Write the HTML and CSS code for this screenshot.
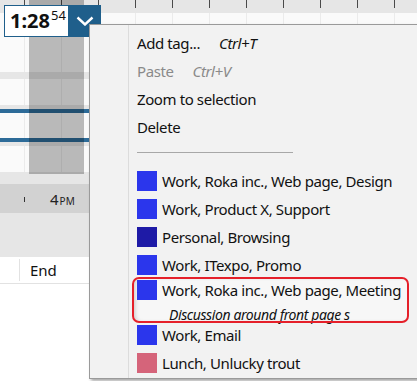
FILE: index.html
```html
<!DOCTYPE html>
<html lang="en">
<head>
    <meta charset="UTF-8">
    <meta name="viewport" content="width=device-width, initial-scale=1.0">
    <title>Timeline</title>
    <link rel="stylesheet" href="styles.css">
</head>
<body>
    <div class="timeline">
        <div class="ruler"></div>
        <div class="lane" style="height: 59px"></div>
        <div class="band" style="height: 7px"></div>
        <div class="lane" style="height: 26px"></div>
        <div class="track track-top"></div>
        <div class="lane" style="height: 25px"></div>
        <div class="track track-bottom"></div>
        <div class="lane" style="height: 26px"></div>
        <div class="band" style="height: 12px"></div>
        <div class="hours">
            <span class="hour-tick"></span>
            <span class="hour">4<small>PM</small></span>
        </div>
        <div class="band" style="height: 44px"></div>
        <div class="list-head">
            <span class="col-sep"></span>
            <span class="col-title">End</span>
        </div>
        <div class="list-body"></div>

        <div class="selection"></div>

        <div class="clock">
            <div class="clock-value">1:28<sup>54</sup></div>
            <button class="clock-btn" type="button">
                <svg width="18" height="10" viewBox="0 0 18 10">
                    <path d="M1.5 1.5 L9 8.5 L16.5 1.5" fill="none" stroke="#fff" stroke-width="2.4"/>
                </svg>
            </button>
        </div>
    </div>

    <div class="menu">
        <div class="menu-item">Add tag...<span class="shortcut">Ctrl+T</span></div>
        <div class="menu-item disabled">Paste<span class="shortcut">Ctrl+V</span></div>
        <div class="menu-item">Zoom to selection</div>
        <div class="menu-item">Delete</div>
        <div class="menu-sep"><span></span></div>

        <div class="tag"><span class="swatch work"></span>Work, Roka inc., Web page, Design</div>
        <div class="tag"><span class="swatch work"></span>Work, Product X, Support</div>
        <div class="tag"><span class="swatch personal"></span>Personal, Browsing</div>
        <div class="tag"><span class="swatch work"></span>Work, ITexpo, Promo</div>
        <div class="tag tag-current">
            <span class="swatch work"></span>
            <span class="tag-title">Work, Roka inc., Web page, Meeting</span>
            <span class="tag-note">Discussion around front page s</span>
        </div>
        <div class="tag"><span class="swatch work"></span>Work, Email</div>
        <div class="tag"><span class="swatch lunch"></span>Lunch, Unlucky trout</div>
    </div>
</body>
</html>
```

FILE: styles.css
```css
html, body {
    margin: 0;
    padding: 0;
    overflow: hidden;
}

body {
    font-family: 'Segoe UI', 'Noto Sans', 'Open Sans', sans-serif;
    width: 417px;
    height: 381px;
    background-color: #fff;
    position: relative;
}

.timeline {
    position: relative;
    display: flex;
    flex-direction: column;
    height: 381px;
}

.ruler {
    height: 13px;
    background: linear-gradient(to right, #4a4a4a 1px, transparent 1px) 24px 0 / 37px 8px repeat-x, #e6e6e6;
}

.lane {
    background: linear-gradient(to right, #ebebeb 1px, transparent 1px) 24px 0 / 37px 100% repeat-x, #fafafa;
}

.band {
    background-color: #e6e6e6;
}

.track {
    height: 8px;
    background-color: #e6e6e6;
}

.track-top {
    border-bottom: 4px solid #2d6b98;
    height: 4px;
}

.track-bottom {
    border-top: 4px solid #2d6b98;
    height: 4px;
}

.hours {
    height: 29px;
    background-color: #d2d2d2;
    display: flex;
    align-items: center;
    position: relative;
}

.hour-tick {
    width: 1px;
    height: 5px;
    background-color: #333;
    margin-left: 24px;
    margin-top: 1px;
}

.hour {
    margin-left: 25px;
    font-size: 15px;
    color: #222;
    margin-top: 1px;
}

.hour small {
    font-size: 10px;
    margin-left: 1px;
}

.list-head {
    height: 26px;
    background-color: #fff;
    border-bottom: 1px solid #e2e2e2;
    display: flex;
    align-items: center;
}

.col-sep {
    width: 1px;
    height: 22px;
    background-color: #e2e2e2;
    margin-left: 19px;
}

.col-title {
    margin-left: 10px;
    font-size: 15px;
    color: #111;
}

.list-body {
    flex: 1;
    background-color: #fff;
}

.selection {
    position: absolute;
    left: 29px;
    top: 0;
    width: 55px;
    height: 174px;
    background-color: rgba(0, 0, 0, 0.26);
}

.clock {
    position: absolute;
    left: 4px;
    top: 5px;
    display: flex;
    height: 32px;
}

.clock-value {
    width: 65px;
    box-sizing: border-box;
    border: 1.5px solid #1f5f8b;
    background-color: #fff;
    font-weight: bold;
    font-size: 20px;
    color: #111;
    padding-left: 5px;
    line-height: 30px;
}

.clock-value sup {
    font-weight: normal;
    font-size: 13px;
    vertical-align: 0;
    position: relative;
    top: -8px;
    margin-left: 1px;
}

.clock-btn {
    width: 32px;
    height: 32px;
    border: none;
    padding: 0;
    background-color: #1f5f8b;
    display: flex;
    align-items: center;
    justify-content: center;
}

.menu {
    position: absolute;
    left: 89px;
    top: 24px;
    width: 340px;
    height: 355px;
    box-sizing: border-box;
    border: 1px solid #9a9a9a;
    background: linear-gradient(to right, #dcdcdc 1px, transparent 1px) 38px 0 / 100% 100% no-repeat, #f2f2f2;
    box-shadow: 2px 2px 3px rgba(0, 0, 0, 0.35);
    padding-top: 4px;
    font-size: 15px;
    letter-spacing: -0.4px;
    color: #111;
}

.menu-item {
    height: 28px;
    display: flex;
    align-items: center;
    padding-left: 47px;
}

.menu-item.disabled {
    color: #8a8a8a;
}

.shortcut {
    font-style: italic;
    margin-left: 19px;
}

.menu-sep {
    height: 15px;
    padding: 11px 0 0 47px;
}

.menu-sep span {
    display: block;
    width: 156px;
    height: 1px;
    background-color: #a8a8a8;
}

.tag {
    height: 28px;
    display: flex;
    align-items: center;
    padding-left: 47px;
    gap: 5px;
    white-space: nowrap;
}

.swatch {
    width: 20px;
    height: 20px;
    flex: none;
}

.work {
    background-color: #2b36ec;
}

.personal {
    background-color: #1e1aa6;
}

.lunch {
    background-color: #d5647a;
}

.tag-current {
    display: grid;
    grid-template-columns: 20px auto;
    column-gap: 5px;
    align-items: start;
    height: 42px;
    width: 273px;
    box-sizing: border-box;
    margin-left: 44px;
    padding: 1px 0 0 3px;
    border-radius: 5px;
    outline: 2px solid #e5202a;
    background-color: #f7f7f7;
    box-shadow: inset 3px 0 4px -2px rgba(0, 0, 0, 0.2);
}

.tag-title {
    line-height: 20px;
}

.tag-note {
    grid-column: 2;
    font-style: italic;
    font-size: 14px;
    line-height: 20px;
    padding-left: 7px;
}
```
